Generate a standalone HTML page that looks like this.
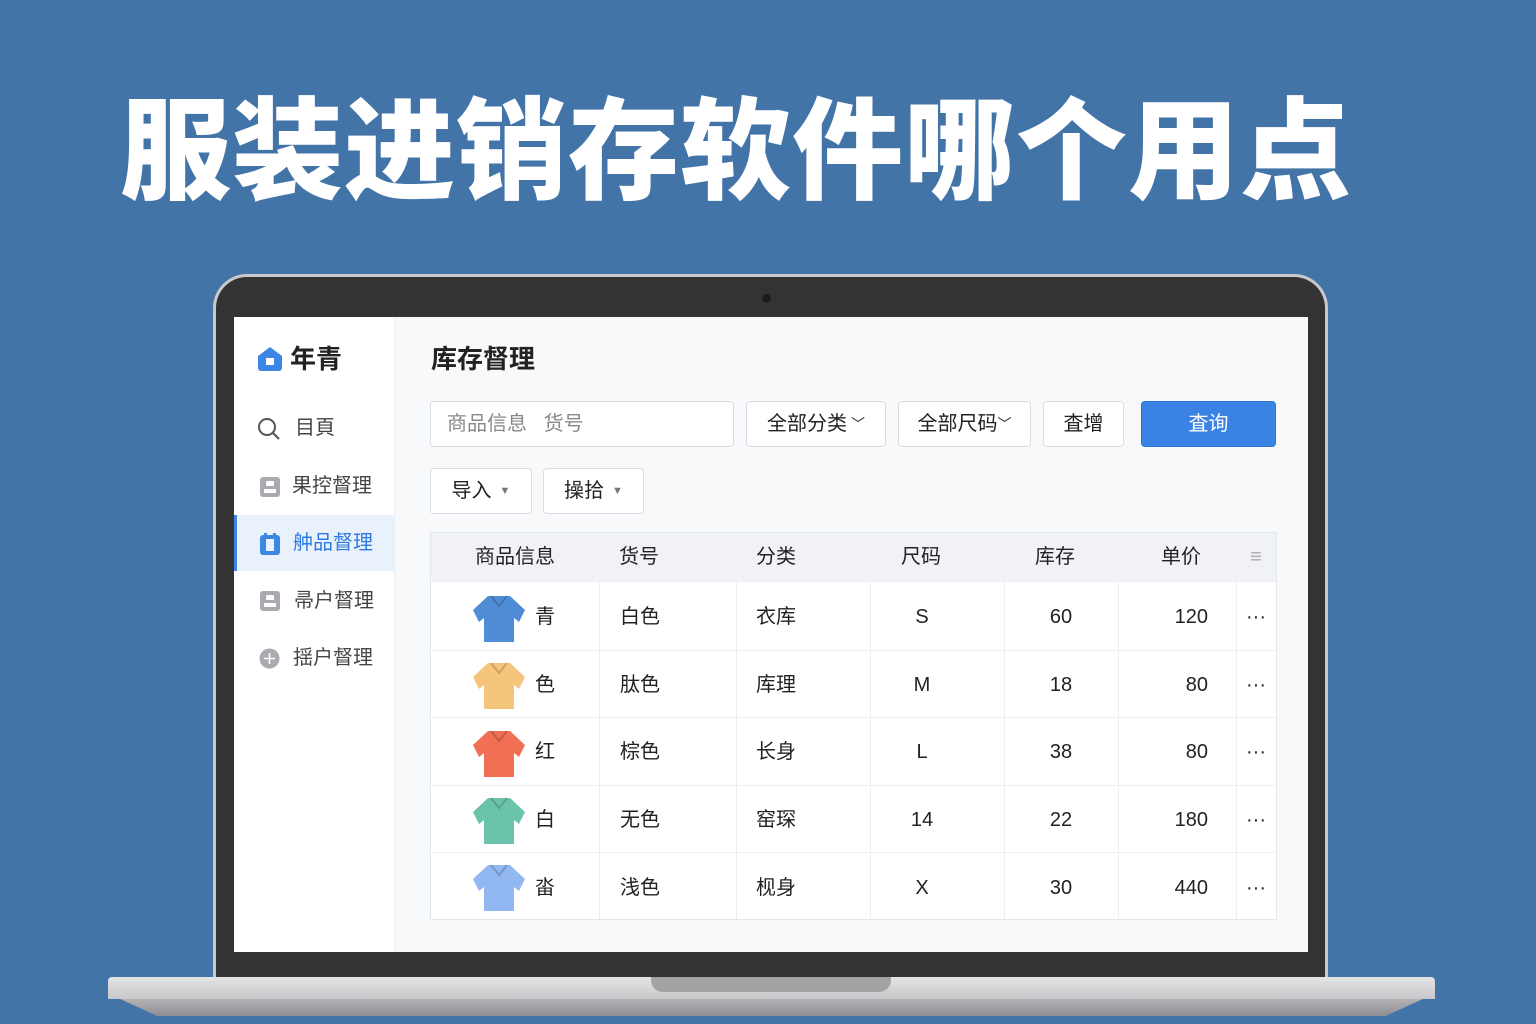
<!DOCTYPE html>
<html><head><meta charset="utf-8"><style>
*{margin:0;padding:0;box-sizing:border-box}
body{width:1536px;height:1024px;background:#4374a8;position:relative;overflow:hidden;font-family:"Liberation Sans","Noto Sans CJK SC",sans-serif;color:#222}
.a{position:absolute}
.title{left:120px;top:87px;font-size:111px;font-weight:900;color:#fff;letter-spacing:1px;white-space:nowrap;line-height:130px}
.lap{left:213px;top:274px;width:1115px;height:712px;background:#333;border-radius:34px 34px 0 0;border:3px solid #c9c9cc;border-bottom:none}
.screen{left:234px;top:317px;width:1074px;height:635px;background:#f7f9fb}
.side{left:234px;top:317px;width:161px;height:635px;background:#fff;border-right:1px solid #eceff3}
.base{left:108px;top:977px;width:1327px;height:22px;background:linear-gradient(#e4e4e6,#c8c8cb);border-radius:4px 4px 0 0}
.base2{left:118px;top:998px;width:1307px;height:18px;background:linear-gradient(#b5b5b8,#8e8e92);clip-path:polygon(0 0,100% 0,97% 100%,3% 100%)}
.notch{left:651px;top:977px;width:240px;height:15px;background:#a3a3a6;border-radius:0 0 12px 12px}
.nav{font-size:20px;color:#444;line-height:24px}
.box{background:#fff;border:1px solid #d9dde3;border-radius:4px;font-size:20px;display:flex;align-items:center;justify-content:center;color:#222;line-height:24px}
.tbl{left:430px;top:532px;width:847px;height:388px;background:#fff;border:1px solid #e3e6ea}
.cell{position:absolute;font-size:20px;color:#222;text-align:center;line-height:24px;height:24px}
.vl{position:absolute;top:48px;width:1px;height:338px;background:#eceef1}
.hl{position:absolute;left:0;width:845px;height:1px;background:#eceef1}
</style></head><body>
<div class="a title">服装进销存软件哪个用点</div>
<div class="a lap"></div>
<div class="a" style="left:762px;top:294px;width:9px;height:9px;border-radius:50%;background:#1c1c1c"></div>
<div class="a screen"></div>
<div class="a side"></div>
<div class="a base2"></div>
<div class="a base"></div>
<div class="a notch"></div>

<svg class="a" style="left:257px;top:346px" width="26" height="26" viewBox="0 0 26 26"><path d="M13 1 L25 10 V22 a3 3 0 0 1-3 3 H4 a3 3 0 0 1-3-3 V10 Z" fill="#3d86e6"/><rect x="9" y="12" width="8" height="7" fill="#fff"/></svg>
<div class="a" style="left:290px;top:344px;font-size:26px;font-weight:600;color:#222;line-height:30px">年青</div>
<svg class="a" style="left:257px;top:417px" width="24" height="24" viewBox="0 0 24 24"><circle cx="10" cy="10" r="8" fill="none" stroke="#555" stroke-width="2"/><path d="M16 16 L22 22" stroke="#555" stroke-width="2.2"/></svg>
<div class="a nav" style="left:295px;top:416px">目頁</div>
<svg class="a" style="left:260px;top:477px" width="20" height="20"><rect width="20" height="20" rx="3" fill="#a8abb0"/><rect x="6" y="4" width="8" height="5" rx="1" fill="#fff"/><rect x="4" y="12" width="12" height="4" fill="#fff"/></svg>
<div class="a nav" style="left:292px;top:474px">果控督理</div>
<div class="a" style="left:234px;top:515px;width:161px;height:56px;background:#e9f1fc;border-left:3px solid #3d86e6"></div>
<svg class="a" style="left:260px;top:533px" width="20" height="22"><rect y="2" width="20" height="20" rx="3" fill="#3d86e6"/><rect x="6" y="6" width="8" height="12" fill="#e9f1fc"/><rect x="4" y="0" width="3" height="5" fill="#3d86e6"/><rect x="13" y="0" width="3" height="5" fill="#3d86e6"/></svg>
<div class="a nav" style="left:293px;top:531px;color:#2f7ae0">舯品督理</div>
<svg class="a" style="left:260px;top:591px" width="20" height="20"><rect width="20" height="20" rx="3" fill="#a8abb0"/><rect x="6" y="4" width="8" height="5" rx="1" fill="#fff"/><rect x="4" y="12" width="12" height="4" fill="#fff"/></svg>
<div class="a nav" style="left:294px;top:589px">帚户督理</div>
<svg class="a" style="left:259px;top:648px" width="21" height="21"><circle cx="10.5" cy="10.5" r="10" fill="#a8abb0"/><path d="M10.5 5v11M5 10.5h11" stroke="#fff" stroke-width="1.6"/></svg>
<div class="a nav" style="left:293px;top:646px">揺户督理</div>

<div class="a" style="left:431px;top:344px;font-size:26px;font-weight:600;color:#222;line-height:30px">库存督理</div>
<div class="a box" style="left:430px;top:401px;width:304px;height:46px;justify-content:flex-start;padding-left:16px;color:#888">商品信息&nbsp;&nbsp;&nbsp;货号</div>
<div class="a box" style="left:746px;top:401px;width:140px;height:46px">全部分类 <span style="font-size:14px;margin-left:4px">﹀</span></div>
<div class="a box" style="left:898px;top:401px;width:133px;height:46px">全部尺码<span style="font-size:14px">﹀</span></div>
<div class="a box" style="left:1043px;top:401px;width:81px;height:46px">査增</div>
<div class="a box" style="left:1141px;top:401px;width:135px;height:46px;background:#3a83e4;border-color:#2f74d0;color:#fff">査询</div>
<div class="a box" style="left:430px;top:468px;width:102px;height:46px">导入 <span style="font-size:11px;color:#777;margin-left:8px">▼</span></div>
<div class="a box" style="left:543px;top:468px;width:101px;height:46px">操拾 <span style="font-size:11px;color:#777;margin-left:8px">▼</span></div>

<div class="a tbl">
 <div style="position:absolute;left:0;top:0;width:845px;height:48px;background:#f0f2f5"></div>
 <div class="cell" style="left:0;width:168px;top:12px">商品信息</div>
 <div class="cell" style="left:168px;width:80px;top:12px">货号</div>
 <div class="cell" style="left:305px;width:80px;top:12px">分类</div>
 <div class="cell" style="left:440px;width:100px;top:12px">尺码</div>
 <div class="cell" style="left:574px;width:100px;top:12px">库存</div>
 <div class="cell" style="left:700px;width:100px;top:12px">单价</div>
 <div class="cell" style="left:805px;width:40px;top:12px;color:#aaa">≡</div>
 <div class="vl" style="left:168px"></div><div class="vl" style="left:305px"></div><div class="vl" style="left:439px"></div><div class="vl" style="left:573px"></div><div class="vl" style="left:687px"></div><div class="vl" style="left:805px"></div>
 <div class="hl" style="top:48px"></div><div class="hl" style="top:117px"></div><div class="hl" style="top:184px"></div><div class="hl" style="top:252px"></div><div class="hl" style="top:319px"></div>
</div>

<svg width="0" height="0" style="position:absolute"><defs><g id="sh"><path d="M17 2 L39 2 L54 16 L48 28 L43 24 L43 48 L13 48 L13 24 L8 28 L2 16 Z"/><path d="M20 2 L28 12 L36 2" fill="none" stroke="rgba(0,0,0,.18)" stroke-width="2"/></g></defs></svg>

<svg class="a" style="left:471px;top:594px" width="56" height="50" fill="#4f8dd6"><use href="#sh"/></svg>
<svg class="a" style="left:471px;top:661px" width="56" height="50" fill="#f6c57c"><use href="#sh"/></svg>
<svg class="a" style="left:471px;top:729px" width="56" height="50" fill="#f06f55"><use href="#sh"/></svg>
<svg class="a" style="left:471px;top:796px" width="56" height="50" fill="#6cc3ac"><use href="#sh"/></svg>
<svg class="a" style="left:471px;top:863px" width="56" height="50" fill="#92b8f2"><use href="#sh"/></svg>

<div class="a cell" style="left:535px;top:605px">青</div><div class="a cell" style="left:620px;top:605px">白色</div><div class="a cell" style="left:756px;top:605px">衣库</div><div class="a cell" style="left:870px;width:104px;top:605px">S</div><div class="a cell" style="left:1004px;width:114px;top:605px">60</div><div class="a cell" style="left:1118px;width:90px;top:605px;text-align:right">120</div><div class="a cell" style="left:1236px;width:40px;top:605px">···</div>
<div class="a cell" style="left:535px;top:673px">色</div><div class="a cell" style="left:620px;top:673px">肽色</div><div class="a cell" style="left:756px;top:673px">库理</div><div class="a cell" style="left:870px;width:104px;top:673px">M</div><div class="a cell" style="left:1004px;width:114px;top:673px">18</div><div class="a cell" style="left:1118px;width:90px;top:673px;text-align:right">80</div><div class="a cell" style="left:1236px;width:40px;top:673px">···</div>
<div class="a cell" style="left:535px;top:740px">红</div><div class="a cell" style="left:620px;top:740px">棕色</div><div class="a cell" style="left:756px;top:740px">长身</div><div class="a cell" style="left:870px;width:104px;top:740px">L</div><div class="a cell" style="left:1004px;width:114px;top:740px">38</div><div class="a cell" style="left:1118px;width:90px;top:740px;text-align:right">80</div><div class="a cell" style="left:1236px;width:40px;top:740px">···</div>
<div class="a cell" style="left:535px;top:808px">白</div><div class="a cell" style="left:620px;top:808px">无色</div><div class="a cell" style="left:756px;top:808px">窑琛</div><div class="a cell" style="left:870px;width:104px;top:808px">14</div><div class="a cell" style="left:1004px;width:114px;top:808px">22</div><div class="a cell" style="left:1118px;width:90px;top:808px;text-align:right">180</div><div class="a cell" style="left:1236px;width:40px;top:808px">···</div>
<div class="a cell" style="left:535px;top:876px">畓</div><div class="a cell" style="left:620px;top:876px">浅色</div><div class="a cell" style="left:756px;top:876px">枧身</div><div class="a cell" style="left:870px;width:104px;top:876px">X</div><div class="a cell" style="left:1004px;width:114px;top:876px">30</div><div class="a cell" style="left:1118px;width:90px;top:876px;text-align:right">440</div><div class="a cell" style="left:1236px;width:40px;top:876px">···</div>
</body></html>
